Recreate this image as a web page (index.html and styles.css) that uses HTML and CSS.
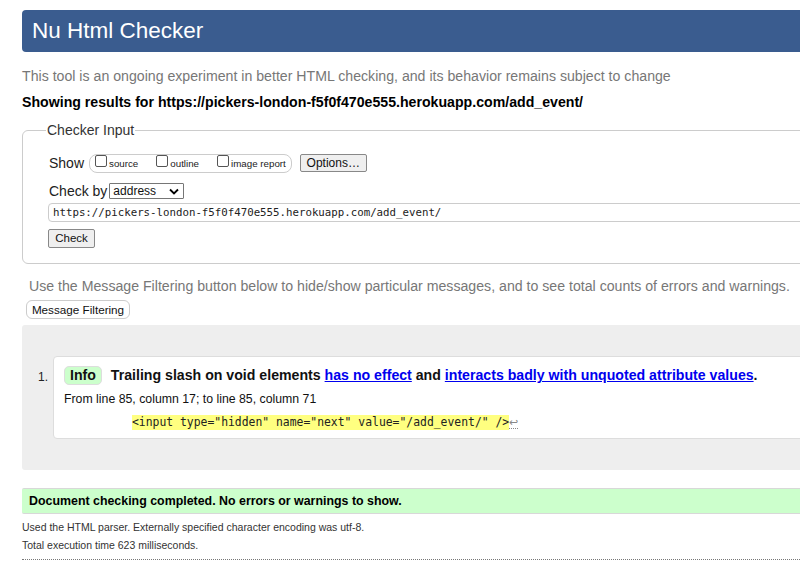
FILE: index.html
```html
<!DOCTYPE html>
<html lang="en">
<head>
<meta charset="utf-8">
<title>Nu Html Checker</title>
<link rel="stylesheet" href="styles.css">
</head>
<body>
<div class="page">
  <h1 class="banner">Nu Html Checker</h1>
  <p class="intro">This tool is an ongoing experiment in better HTML checking, and its behavior remains subject to change</p>
  <p class="showing">Showing results for https://pickers-london-f5f0f470e555.herokuapp.com/add_event/</p>

  <fieldset class="checker">
    <legend>Checker Input</legend>
    <div class="row show-row">
      <span class="lbl">Show</span>
      <span class="group">
        <label class="opt"><span class="cb"></span>source</label>
        <label class="opt"><span class="cb"></span>outline</label>
        <label class="opt"><span class="cb"></span>image report</label>
      </span>
      <span class="btn options">Options…</span>
    </div>
    <div class="row checkby-row">
      <span class="lbl">Check by</span>
      <span class="select">address<svg width="10" height="7" viewBox="0 0 10 7"><path d="M1 1.5 L5 5.5 L9 1.5" fill="none" stroke="#000" stroke-width="1.8"/></svg></span>
    </div>
    <div class="url">https://pickers-london-f5f0f470e555.herokuapp.com/add_event/</div>
    <span class="btn check">Check</span>
  </fieldset>

  <p class="filter-note">Use the Message Filtering button below to hide/show particular messages, and to see total counts of errors and warnings.</p>
  <span class="btn filter">Message Filtering</span>

  <div class="results">
    <ol class="msgs">
      <li class="msg">
        <span class="num">1.</span>
        <div class="card">
          <p class="title"><span class="badge">Info</span> Trailing slash on void elements <a href="#">has no effect</a> and <a href="#">interacts badly with unquoted attribute values</a>.</p>
          <p class="loc">From line 85, column 17; to line 85, column 71</p>
          <p class="extract"><code class="hl">&lt;input type="hidden" name="next" value="/add_event/" /&gt;</code><span class="lf">↩</span></p>
        </div>
      </li>
    </ol>
  </div>

  <p class="done">Document checking completed. No errors or warnings to show.</p>
  <p class="meta">Used the HTML parser. Externally specified character encoding was utf-8.</p>
  <p class="meta">Total execution time 623 milliseconds.</p>
  <hr class="dots">
</div>
</body>
</html>
```

FILE: styles.css
```css
html, body {
  margin: 0;
  padding: 0;
  background: #fff;
  overflow: hidden;
}
body {
  font-family: "Liberation Sans", Arial, sans-serif;
  font-size: 14.15px;
  color: #000;
}
.page {
  width: 860px;
  padding: 10px 0 0 22px;
}
.banner {
  margin: 0;
  height: 42px;
  line-height: 42px;
  padding-left: 10px;
  background: #3a5c8f;
  color: #fff;
  font-weight: normal;
  font-size: 22.5px;
  border-radius: 4px 0 0 4px;
}
.intro {
  margin: 15px 0 0;
  line-height: 18px;
  color: #777;
}
.showing {
  margin: 8px 0 0;
  line-height: 18px;
  font-weight: bold;
}
.checker {
  margin: 10px 0 0;
  padding: 14px 26px 15px;
  border: 1px solid #ccc;
  border-radius: 6px;
}
.checker legend {
  padding: 0 1px;
  margin-left: -3px;
  color: #333;
  font-size: 14px;
  line-height: 18px;
}
.row {
  display: flex;
  align-items: center;
}
.lbl {
  font-size: 14px;
  color: #222;
}
.show-row {
  height: 20px;
}
.group {
  display: flex;
  align-items: center;
  margin-left: 5px;
  height: 17px;
  border: 1px solid #ccc;
  border-radius: 8px;
  padding: 0 5px 0 5px;
  font-size: 9.75px;
  color: #222;
}
.opt {
  display: flex;
  align-items: center;
  margin-right: 18px;
}
.opt:last-child {
  margin-right: 0;
}
.cb {
  width: 10px;
  height: 10px;
  border: 1px solid #555;
  border-radius: 2px;
  margin-right: 2px;
  background: #fff;
  position: relative;
  top: -2px;
}
.btn {
  display: inline-block;
  box-sizing: border-box;
  background: #efefef;
  border: 1px solid #888;
  border-radius: 2px;
  font-size: 11.5px;
  color: #111;
  text-align: center;
}
.options {
  margin-left: 8px;
  width: 67px;
  height: 18px;
  line-height: 16px;
  font-size: 12px;
}
.checkby-row {
  margin-top: 9px;
  height: 18px;
}
.select {
  display: inline-flex;
  align-items: center;
  justify-content: space-between;
  box-sizing: border-box;
  width: 75px;
  height: 16px;
  margin-left: 2px;
  padding: 0 4px 0 3px;
  border: 1px solid #767676;
  border-radius: 1px;
  font-size: 12px;
  color: #111;
}
.url {
  box-sizing: border-box;
  margin: 3px 0 0 -1px;
  height: 19px;
  line-height: 17px;
  padding-left: 4px;
  border: 1px solid #ccc;
  border-radius: 4px 0 0 4px;
  font-family: "DejaVu Sans Mono", monospace;
  font-size: 10.75px;
  color: #222;
}
.check {
  margin: 7px 0 0 -1px;
  width: 47px;
  height: 19px;
  line-height: 17px;
}
.filter-note {
  margin: 13px 0 0 7px;
  line-height: 18px;
  color: #777;
}
.filter {
  margin: 5px 0 0 4px;
  width: 104px;
  height: 19px;
  line-height: 17px;
  font-size: 11.7px;
  border-color: #ccc;
  border-radius: 6px;
  background: #fff;
}
.results {
  margin-top: 6px;
  background: #eee;
  border-radius: 3px 0 0 3px;
  padding: 31px 0 31px 31px;
}
.msgs {
  list-style: none;
  margin: 0;
  padding: 0;
}
.msg {
  position: relative;
}
.num {
  position: absolute;
  left: -15px;
  top: 14px;
  font-size: 12px;
  color: #222;
}
.card {
  background: #fff;
  border: 1px solid #ddd;
  border-radius: 4px 0 0 4px;
  padding: 8px 0 9px 10px;
}
.title {
  margin: 0;
  font-weight: bold;
  line-height: 20px;
  color: #111;
}
.badge {
  display: inline-block;
  background: #cfc;
  border: 1px solid #ddd;
  border-radius: 5px;
  padding: 0 5px 0 5px;
  line-height: 17px;
  margin-right: 5px;
}
.title a {
  color: #0000ee;
  text-decoration: underline;
}
.loc {
  margin: 7px 0 0;
  font-size: 12.3px;
  line-height: 14px;
  color: #111;
}
.extract {
  margin: 8px 0 0 68px;
  line-height: 15px;
  height: 15px;
}
.hl {
  display: inline-block;
  background: #ffff80;
  font-family: "DejaVu Sans Mono", monospace;
  font-size: 11.4px;
  line-height: 15px;
  color: #222;
}
.lf {
  color: #888;
  font-size: 11px;
  border-bottom: 1px dotted #888;
}
.done {
  margin: 18px 0 0;
  height: 24px;
  line-height: 24px;
  background: #cfc;
  border-top: 1px solid #d8d8d8;
  border-bottom: 1px solid #d8d8d8;
  border-radius: 2px 0 0 2px;
  padding-left: 7px;
  font-weight: bold;
  font-size: 12.4px;
}
.meta {
  margin: 6px 0 0;
  font-size: 10.5px;
  line-height: 14px;
  color: #333;
}
.meta + .meta {
  margin-top: 4px;
}
.dots {
  margin: 7px 0 0;
  border: 0;
  border-top: 1px dotted #777;
  height: 0;
}
```
